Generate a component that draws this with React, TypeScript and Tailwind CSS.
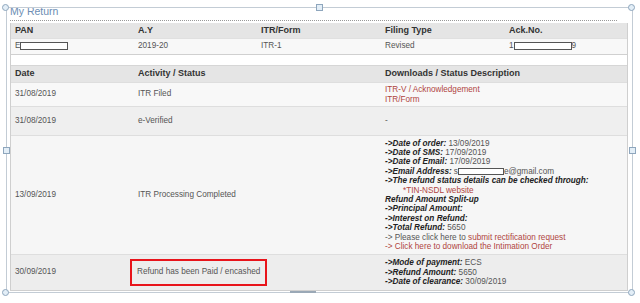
const link = "text-[#b0453f]";

function Redact({ w }: { w: number }) {
  return (
    <span
      className="inline-block h-[8px] border border-[#555] bg-white align-middle"
      style={{ width: w }}
    />
  );
}

function Handle({ className, round }: { className: string; round?: boolean }) {
  return (
    <div
      className={`absolute size-[7px] border border-[#8ea6bd] bg-[#e3eef7] ${
        round ? "rounded-full" : ""
      } ${className}`}
    />
  );
}

function Line({ label, value }: { label: string; value?: React.ReactNode }) {
  return (
    <div>
      <span className="font-bold italic text-[#222]">{label}</span>
      {value !== undefined && <span> {value}</span>}
    </div>
  );
}

export default function App() {
  return (
    <div className="relative h-[303px] w-[640px] overflow-hidden bg-white font-['Liberation_Sans',Arial,sans-serif] text-[8.2px] text-[#555]">
      {/* selection frame of the editor */}
      <div className="absolute left-[6px] top-[7px] h-[286px] w-[627px] border border-[#c3ccd5]" />
      <Handle round className="left-[2px] top-[4px]" />
      <Handle round className="left-[628px] top-[4px]" />
      <Handle round className="left-[2px] top-[289px]" />
      <Handle round className="left-[628px] top-[289px]" />
      <Handle className="left-[316px] top-[4px] size-[6px]" />
      <Handle className="left-[3px] top-[147px] size-[6px]" />
      <Handle className="left-[629px] top-[147px] size-[6px]" />
      <div className="absolute left-[290px] top-[291px] h-[2px] w-[26px] bg-[#9aa8b6]" />

      <div className="pl-[10px] pt-[5px]">
        <div className="w-[607px] border-b border-dotted border-[#999] pb-[2px] text-[10.5px] leading-[13px] text-[#6b8db3]">
          My Return
        </div>

        <div className="mt-[2px] w-[618px] border-x border-b border-[#cfcfcf]">
          {/* summary table */}
          <div className="border-b border-[#d0d0d0]">
            <div className="grid h-[15px] grid-cols-[124px_124px_124px_124px_1fr] items-center bg-[#e5e5e5] text-[9px] font-bold text-[#333]">
              <div className="pl-[4px]">PAN</div>
              <div className="pl-[3px]">A.Y</div>
              <div className="pl-[2px]">ITR/Form</div>
              <div className="pl-[2px]">Filing Type</div>
              <div className="pl-[2px]">Ack.No.</div>
            </div>
            <div className="grid h-[16px] grid-cols-[124px_124px_124px_124px_1fr] items-center border-t border-[#e0e0e0] bg-[#f8f8f8]">
              <div className="flex items-center pl-[4px]">
                E<Redact w={48} />
              </div>
              <div className="pl-[3px]">2019-20</div>
              <div className="pl-[2px]">ITR-1</div>
              <div className="pl-[2px]">Revised</div>
              <div className="flex items-center pl-[2px]">
                1<Redact w={58} />9
              </div>
            </div>
          </div>

          <div className="h-[10px] bg-white" />

          {/* activity table */}
          <div className="border-t border-[#d6d6d6]">
            <div className="grid h-[16px] grid-cols-[124px_248px_1fr] items-center bg-[#e5e5e5] text-[9px] font-bold text-[#333]">
              <div className="pl-[4px]">Date</div>
              <div className="pl-[3px]">Activity / Status</div>
              <div className="pl-[2px]">Downloads / Status Description</div>
            </div>

            <div className="grid h-[24px] grid-cols-[124px_248px_1fr] items-center border-t border-[#dedede] bg-[#f8f8f8]">
              <div className="pl-[4px]">31/08/2019</div>
              <div className="pl-[3px]">ITR Filed</div>
              <div className={`pl-[2px] leading-[10px] ${link}`}>
                <div>ITR-V / Acknowledgement</div>
                <div>ITR/Form</div>
              </div>
            </div>

            <div className="grid h-[29px] grid-cols-[124px_248px_1fr] items-center border-t border-[#dedede] bg-[#efefef]">
              <div className="pl-[4px]">31/08/2019</div>
              <div className="pl-[3px]">e-Verified</div>
              <div className="pl-[2px]">-</div>
            </div>

            <div className="grid h-[119px] grid-cols-[124px_248px_1fr] items-center border-t border-[#dedede] bg-[#f6f6f6]">
              <div className="pl-[4px]">13/09/2019</div>
              <div className="pl-[3px]">ITR Processing Completed</div>
              <div className="pl-[2px] leading-[9.4px]">
                <Line label="->Date of order:" value="13/09/2019" />
                <Line label="->Date of SMS:" value="17/09/2019" />
                <Line label="->Date of Email:" value="17/09/2019" />
                <div className="flex items-center">
                  <span className="font-bold italic text-[#222]">{"->Email Address:"}</span>
                  <span className="ml-[2px]">s</span>
                  <span className="inline-block h-[7px] w-[46px] border border-[#555] bg-white" />
                  <span>e@gmail.com</span>
                </div>
                <Line label="->The refund status details can be checked through:" />
                <div className={`pl-[18px] ${link}`}>*TIN-NSDL website</div>
                <Line label="Refund Amount Split-up" />
                <Line label="->Principal Amount:" />
                <Line label="->Interest on Refund:" />
                <Line label="->Total Refund:" value="5650" />
                <div>
                  -&gt; Please click here to{" "}
                  <span className={link}>submit rectification request</span>
                </div>
                <div className={link}>-&gt; Click here to download the Intimation Order</div>
              </div>
            </div>

            <div className="grid h-[36px] grid-cols-[124px_248px_1fr] items-center border-t border-[#dedede] bg-[#ededed]">
              <div className="pl-[4px]">30/09/2019</div>
              <div className="pl-[3px]">
                <span className="-ml-[8px] inline-block border-2 border-[#e8141b] px-[5px] py-[5px]">
                  Refund has been Paid / encashed
                </span>
              </div>
              <div className="pl-[2px] leading-[9.4px]">
                <Line label="->Mode of payment:" value="ECS" />
                <Line label="->Refund Amount:" value="5650" />
                <Line label="->Date of clearance:" value="30/09/2019" />
              </div>
            </div>
          </div>
        </div>
      </div>
    </div>
  );
}
